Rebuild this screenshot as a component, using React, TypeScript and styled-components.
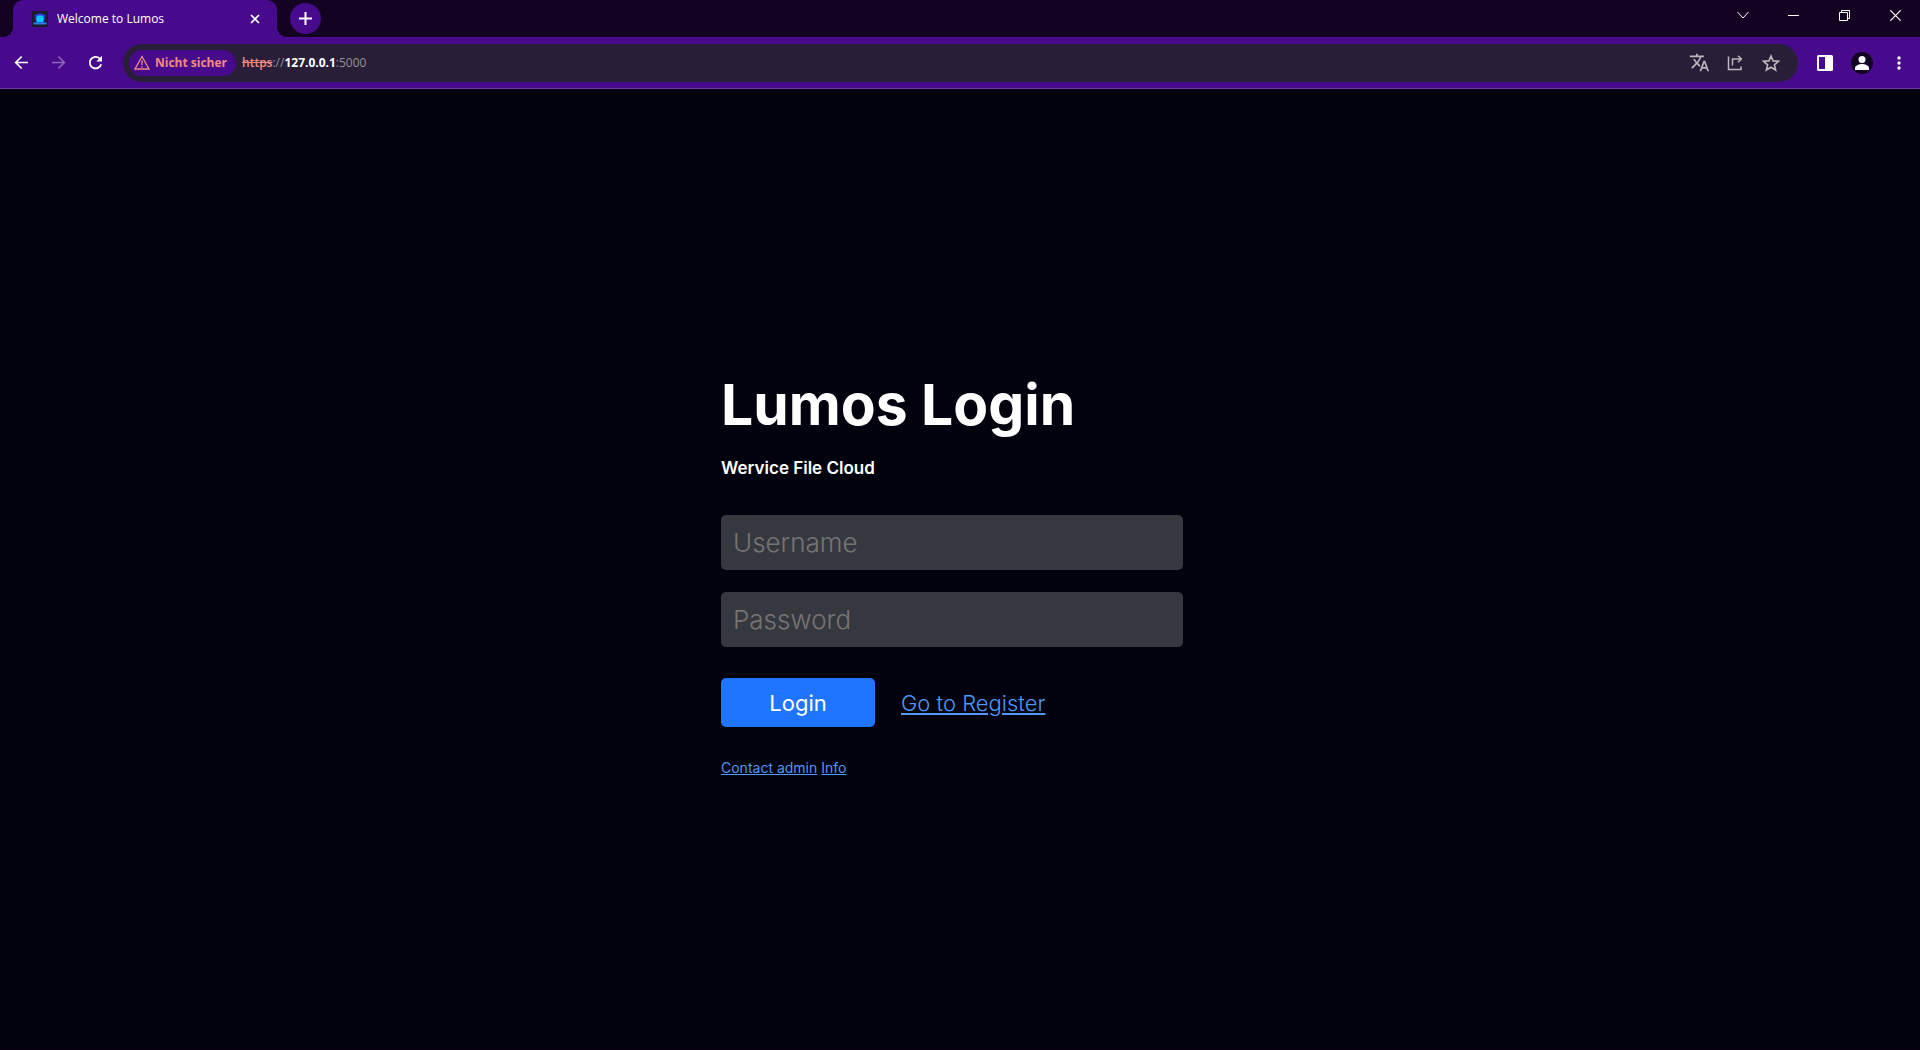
import React from "react";
import styled, { createGlobalStyle } from "styled-components";

const purple = "#480a8c";
const strip = "#140223";
const uiFont = `"Open Sans", "Noto Sans", sans-serif`;
const pageFont = `Inter, "Liberation Sans", sans-serif`;

const GlobalStyle = createGlobalStyle`
  *, *::before, *::after { box-sizing: border-box; }
  html, body, #root { height: 100%; }
  body { margin: 0; background: #01020d; }
  button, input { font: inherit; }
`;

const Window = styled.div`
  display: flex;
  flex-direction: column;
  min-height: 100vh;
  background: #01020d;
`;

const TabStrip = styled.header`
  display: flex;
  align-items: flex-start;
  height: 37px;
  padding: 0 2px 0 13px;
  background: ${strip};
  font: 12px/16px ${uiFont};
`;

const Tab = styled.div`
  position: relative;
  display: flex;
  align-items: center;
  width: 264px;
  height: 37px;
  padding: 0 13px 0 19px;
  border-radius: 10px 10px 0 0;
  background: ${purple};
  color: #fff;

  &::before,
  &::after {
    content: "";
    position: absolute;
    bottom: 0;
    width: 10px;
    height: 10px;
  }
  &::before {
    right: 100%;
    background: radial-gradient(circle at 0 0, transparent 10px, ${purple} 10px);
  }
  &::after {
    left: 100%;
    background: radial-gradient(circle at 100% 0, transparent 10px, ${purple} 10px);
  }
`;

const TabTitle = styled.span`
  flex: 1;
  margin-left: 9px;
  white-space: nowrap;
`;

const IconButton = styled.button<{ $w: number; $h?: number; $color?: string }>`
  display: flex;
  align-items: center;
  justify-content: center;
  flex: none;
  width: ${(p) => p.$w}px;
  height: ${(p) => p.$h ?? 30}px;
  padding: 0;
  border: 0;
  background: none;
  color: ${(p) => p.$color ?? "#fff"};

  svg {
    display: block;
  }
`;

const NewTab = styled(IconButton)`
  margin: 3px 0 0 13px;
  border-radius: 50%;
  background: ${purple};
`;

const WindowControls = styled.div`
  display: flex;
  gap: 6px;
  margin-left: auto;
`;

const Toolbar = styled.nav`
  display: flex;
  align-items: center;
  height: 52px;
  padding: 0 3px;
  border-bottom: 1px solid #6b3aa5;
  background: ${purple};
  font: 12px/16px ${uiFont};
`;

const AddressBar = styled.div`
  display: flex;
  align-items: center;
  flex: 1;
  height: 38px;
  margin: 0 8px 0 9px;
  padding: 0 9px 0 6px;
  border-radius: 19px;
  background: #291e38;
`;

const SecurityChip = styled.button`
  display: flex;
  align-items: center;
  gap: 5px;
  flex: none;
  height: 26px;
  padding: 0 9px 0 5px;
  border: 0;
  border-radius: 13px;
  background: ${purple};
  color: #f28b82;
  font-weight: 700;
  white-space: nowrap;
`;

const Url = styled.div`
  flex: 1;
  margin-left: 6px;
  color: #958f9c;

  s {
    color: #f28b82;
    font-weight: 600;
  }
  b {
    color: #fff;
    font-weight: 700;
  }
`;

const Page = styled.main`
  display: flex;
  align-items: center;
  justify-content: center;
  flex: 1;
  padding: 10px 16px 0 0;
  border-bottom: 2px solid #05000f;
  color: #fff;
  font-family: ${pageFont};
`;

const LoginForm = styled.form`
  width: 462px;
`;

const Title = styled.h1`
  margin: 0;
  font-size: 57px;
  line-height: 72px;
  font-weight: 700;
  white-space: nowrap;
`;

const Subtitle = styled.p`
  margin: 15px 0 35px;
  font-size: 17px;
  line-height: 24px;
  font-weight: 600;
`;

const Field = styled.input`
  display: block;
  width: 100%;
  height: 55px;
  margin-bottom: 22px;
  padding: 0 12px;
  border: 0;
  border-radius: 5px;
  background: #36383f;
  color: #fff;
  font-size: 26px;
  font-weight: 300;

  &::placeholder {
    color: #757575;
    opacity: 1;
  }
`;

const Actions = styled.div`
  display: flex;
  align-items: center;
  gap: 26px;
  margin: 31px 0;
`;

const Submit = styled.button`
  width: 154px;
  height: 49px;
  border: 0;
  border-radius: 5px;
  background: #1f75ff;
  color: #fff;
  font-size: 22px;
`;

const Link = styled.a<{ $size: number; $weight?: number }>`
  color: #4f98f6;
  font-size: ${(p) => p.$size}px;
  font-weight: ${(p) => p.$weight ?? 400};
  text-decoration: underline;
`;

const Footer = styled.footer`
  line-height: 20px;
  font-size: 14px;
`;

const Stroke = ({ size = 16, width = 2, children }: { size?: number; width?: number; children: React.ReactNode }) => (
  <svg width={size} height={size} viewBox={`0 0 ${size} ${size}`} fill="none" stroke="currentColor" strokeWidth={width}>
    {children}
  </svg>
);

const Favicon = () => (
  <svg width="16" height="16" viewBox="0 0 16 16">
    <rect width="16" height="16" fill="#1b1b2b" />
    <path d="M2.500 4L8 2l5.500 2-1.500 8H4z" fill="#2b35d8" />
    <path d="M5 4.500h6l.8 3.500-.8 3H5l-.8-3z" fill="#09c8fb" />
    <path d="M1 11.500h14l-1 2H2z" fill="#2d7ee6" />
  </svg>
);

export default function App() {
  return (
    <Window>
      <GlobalStyle />
      <TabStrip>
        <Tab>
          <Favicon />
          <TabTitle>Welcome to Lumos</TabTitle>
          <IconButton $w={18} $h={18} aria-label="Tab schließen">
            <Stroke size={10} width={1.7}>
              <path d="M1 1l8 8M9 1L1 9" />
            </Stroke>
          </IconButton>
        </Tab>
        <NewTab $w={31} $h={31} aria-label="Neuer Tab">
          <Stroke size={13}>
            <path d="M6.500 0v13M0 6.500h13" />
          </Stroke>
        </NewTab>
        <WindowControls>
          <IconButton $w={45} aria-label="Tabs durchsuchen">
            <Stroke size={12} width={1}>
              <path d="M.5 3l5.500 6 5.500-6" />
            </Stroke>
          </IconButton>
          <IconButton $w={45} aria-label="Minimieren">
            <Stroke size={11} width={1}>
              <path d="M0 5.500h11" />
            </Stroke>
          </IconButton>
          <IconButton $w={45} aria-label="Verkleinern">
            <Stroke size={11} width={1}>
              <path d="M.5 2.500h8v8h-8zM2.500 2V.5h8v8H9" />
            </Stroke>
          </IconButton>
          <IconButton $w={45} aria-label="Schließen">
            <Stroke size={11} width={1.2}>
              <path d="M.3.3l10.400 10.400M10.700.3L.3 10.700" />
            </Stroke>
          </IconButton>
        </WindowControls>
      </TabStrip>

      <Toolbar>
        <IconButton $w={37} aria-label="Zurück">
          <Stroke size={15} width={1.7}>
            <path d="M14 7.500H2M7.700 1.500l-6 6 6 6" />
          </Stroke>
        </IconButton>
        <IconButton $w={37} $color="#8e66b8" aria-label="Vorwärts">
          <Stroke size={15} width={1.7}>
            <path d="M1 7.500h12M7.300 1.500l6 6-6 6" />
          </Stroke>
        </IconButton>
        <IconButton $w={37} aria-label="Neu laden">
          <Stroke size={15} width={1.8}>
            <path d="M13.200 9.200A5.800 5.800 0 1 1 11.600 3.400L13 4.800" />
            <path d="M14 .8v5.700H8.300z" fill="currentColor" stroke="none" />
          </Stroke>
        </IconButton>
        <AddressBar>
          <SecurityChip>
            <Stroke size={16} width={1.3}>
              <path d="M8 1.500l7 12.500H1z" />
              <path d="M8 5.500v4.500M8 11v1.500" />
            </Stroke>
            Nicht sicher
          </SecurityChip>
          <Url>
            <s>https</s>://<b>127.0.0.1</b>:5000
          </Url>
          <IconButton $w={36} $color="#bbb7bf" aria-label="Übersetzen">
            <svg width="21" height="21" viewBox="0 0 24 24" fill="currentColor">
              <path d="M12.870 15.070l-2.540-2.510.03-.03A17.520 17.520 0 0 0 14.070 6H17V4h-7V2H8v2H1v2h11.170C11.500 7.920 10.440 9.750 9 11.350 8.070 10.320 7.300 9.190 6.690 8h-2c.73 1.630 1.730 3.170 2.980 4.560l-5.090 5.020L4 19l5-5 3.110 3.110.76-2.040zM18.500 10h-2L12 22h2l1.120-3h4.750L21 22h2l-4.500-12zm-2.620 7l1.620-4.330L19.120 17h-3.240z" />
            </svg>
          </IconButton>
          <IconButton $w={36} $color="#bbb7bf" aria-label="Teilen">
            <Stroke size={16} width={1.5}>
              <path d="M1.500 1.500v13h12.500v-3" />
              <path d="M5.500 10.500V4H14M11 .7L14.400 4 11 7.300" />
            </Stroke>
          </IconButton>
          <IconButton $w={36} $color="#bbb7bf" aria-label="Lesezeichen hinzufügen">
            <Stroke size={18} width={1.6}>
              <path d="M9 2l2.100 4.900 5.300.4-4 3.500 1.200 5.200L9 13.200 4.400 16l1.200-5.200-4-3.500 5.300-.4z" />
            </Stroke>
          </IconButton>
        </AddressBar>
        <IconButton $w={37} aria-label="Seitenleiste">
          <svg width="16" height="16" viewBox="0 0 16 16">
            <rect width="16" height="16" rx="1.500" fill="#fff" />
            <rect x="2" y="2" width="6" height="12" fill={purple} />
          </svg>
        </IconButton>
        <IconButton $w={37} aria-label="Profil">
          <svg width="22" height="22" viewBox="0 0 22 22">
            <circle cx="11" cy="11" r="11" fill={strip} />
            <circle cx="11" cy="7.500" r="3.500" fill="#fff" />
            <path d="M4 18v-2c0-2.500 4.500-4 7-4s7 1.500 7 4v2z" fill="#fff" />
          </svg>
        </IconButton>
        <IconButton $w={37} aria-label="Menü">
          <svg width="4" height="14" viewBox="0 0 4 14" fill="#fff">
            <circle cx="2" cy="2" r="1.700" />
            <circle cx="2" cy="7" r="1.700" />
            <circle cx="2" cy="12" r="1.700" />
          </svg>
        </IconButton>
      </Toolbar>

      <Page>
        <LoginForm onSubmit={(e) => e.preventDefault()}>
          <Title>Lumos Login</Title>
          <Subtitle>Wervice File Cloud</Subtitle>
          <Field type="text" name="username" placeholder="Username" aria-label="Username" />
          <Field type="password" name="password" placeholder="Password" aria-label="Password" />
          <Actions>
            <Submit type="submit">Login</Submit>
            <Link $size={22} $weight={300} href="#register">
              Go to Register
            </Link>
          </Actions>
          <Footer>
            <Link $size={14} href="#contact">
              Contact admin
            </Link>{" "}
            <Link $size={14} href="#info">
              Info
            </Link>
          </Footer>
        </LoginForm>
      </Page>
    </Window>
  );
}
